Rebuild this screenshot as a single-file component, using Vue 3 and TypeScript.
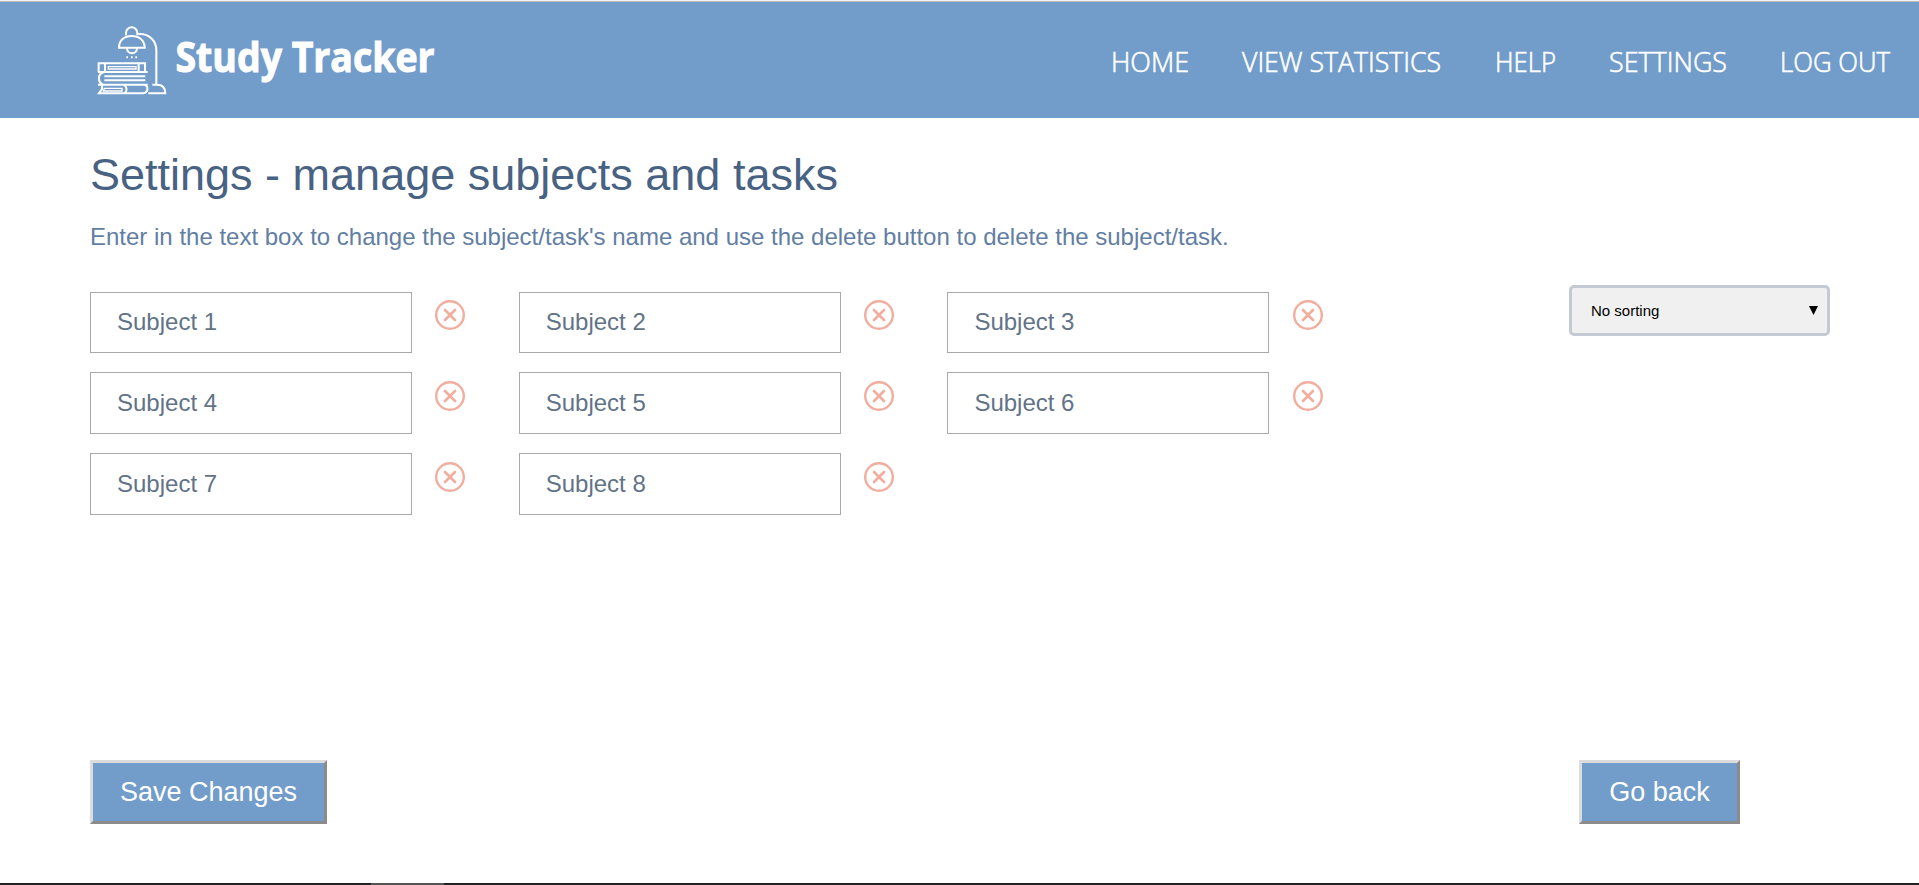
<script setup lang="ts">
import { ref } from 'vue'

interface NavItem {
  label: string
  width: number
}

const navItems: NavItem[] = [
  { label: 'HOME', width: 78 },
  { label: 'VIEW STATISTICS', width: 199 },
  { label: 'HELP', width: 61 },
  { label: 'SETTINGS', width: 118 },
  { label: 'LOG OUT', width: 110 },
]

const subjects = ref<string[]>(Array.from({ length: 8 }, (_, i) => `Subject ${i + 1}`))
const sorting = ref('none')

function removeSubject(index: number): void {
  subjects.value.splice(index, 1)
}
</script>

<template>
  <div class="page">
    <header class="header">
      <div class="brand">
        <svg class="lamp" viewBox="0 0 270 270" fill="none" stroke="#fff" stroke-width="6.2">
          <path d="M123 61V53a17 16 0 0 1 34 0v8" />
          <path d="M102 98C102 76 118 63 140 63S179 76 179 98Z" />
          <path d="M126 100a15 15 0 0 0 30 0" />
          <path d="M124 127h5M138 127h5M151 127h5" />
          <path d="M157 57h8c29 0 49 22 49 48v103" />
          <path d="M202 209h14c15 0 25 9 25 26h-51" />
          <path d="M41 171v-26h139v26M60 145v26M161 145v26M39 171h149" />
          <path d="M70 155h83v7H70z" stroke-width="4" />
          <path d="M56 172c-19 5-19 32 0 37M58 184h123M58 196h123M39 209h149" />
          <path d="M51 211v11l-9 13h132c17-2 17-23 4-25M118 211c9 5 9 19 0 24" />
          <path d="M58 220h53v8H55z" stroke-width="4" />
        </svg>
        <svg class="wordmark" width="270" height="70">
          <text x="0.5" y="42" textLength="259" lengthAdjust="spacingAndGlyphs">Study Tracker</text>
        </svg>
      </div>
      <nav class="nav">
        <a v-for="item in navItems" :key="item.label">
          <svg :width="item.width" height="42">
            <text x="0" y="27" :textLength="item.width" lengthAdjust="spacingAndGlyphs">{{ item.label }}</text>
          </svg>
        </a>
      </nav>
    </header>

    <main class="content">
      <h1>Settings - manage subjects and tasks</h1>
      <p class="hint">Enter in the text box to change the subject/task's name and use the delete button to delete the subject/task.</p>

      <div class="row">
        <div class="subjects">
          <div v-for="(_, i) in subjects" :key="i" class="subject">
            <input v-model="subjects[i]" type="text" />
            <button class="delete" type="button" aria-label="Delete" @click="removeSubject(i)">
              <svg width="30" height="30" viewBox="0 0 30 30" fill="none" stroke="#f1ad9d">
                <circle cx="15" cy="15" r="13.8" stroke-width="2.4" />
                <path d="M10 10l10 10M20 10L10 20" stroke-width="2.7" stroke-linecap="round" />
              </svg>
            </button>
          </div>
        </div>
        <div class="sort">
          <select v-model="sorting">
            <option value="none">No sorting</option>
          </select>
          <svg class="caret" width="9" height="9" viewBox="0 0 9 9"><path d="M0 0h9L4.5 9z" /></svg>
        </div>
      </div>

      <div class="actions">
        <button class="action" type="button">Save Changes</button>
        <button class="action back" type="button">Go back</button>
      </div>
    </main>
    <footer class="edge"><span></span></footer>
  </div>
</template>

<style>
body {
  margin: 0;
  background: #fff;
}
</style>

<style scoped>
.page {
  display: flex;
  flex-direction: column;
  box-sizing: border-box;
  height: 885px;
  overflow: hidden;
  border-top: 1px solid #f1f3f4;
  font-family: "Liberation Sans", Arial, sans-serif;
}

.header {
  display: flex;
  justify-content: space-between;
  box-sizing: border-box;
  height: 117px;
  padding: 0 29px 0 85px;
  border-top: 1px solid #bcbcb9;
  background: #729cca;
}

.brand {
  display: flex;
}

.lamp {
  width: 90px;
  height: 90px;
  margin-top: 13px;
}

.wordmark {
  margin-top: 28px;
}

.wordmark text {
  fill: #fff;
  font: 700 41px "Open Sans", "Noto Sans", sans-serif;
  stroke: #fff;
  stroke-width: 1px;
}

.nav {
  display: flex;
  gap: 53.2px;
  padding-top: 43px;
}

.nav text {
  fill: #fff;
  font: 300 27px "Open Sans", "Noto Sans", sans-serif;
  stroke: #fff;
  stroke-width: 0.6px;
}

svg {
  overflow: visible;
}

.nav svg,
.delete svg {
  display: block;
}

.content {
  flex: 1;
  padding: 0 89px 0 90px;
}

h1 {
  margin: 31px 0 0;
  color: #476282;
  font-size: 45px;
  font-weight: 400;
  line-height: 52px;
}

.hint {
  margin: 22px 0 0;
  color: #627ea3;
  font-size: 24px;
  line-height: 28px;
  white-space: nowrap;
}

.row {
  display: flex;
  justify-content: space-between;
  align-items: flex-start;
  height: 509px;
  padding-top: 34px;
  box-sizing: border-box;
}

.subjects {
  display: grid;
  grid-template-columns: repeat(3, 428.7px);
  grid-auto-rows: 80.8px;
  padding-top: 6.6px;
}

.subject {
  display: flex;
  align-items: flex-start;
  gap: 23.2px;
}

input {
  box-sizing: border-box;
  width: 322px;
  height: 61.4px;
  padding: 0 26px 0.4px;
  border: 1px solid #a9a9a9;
  color: #627387;
  background: #fff;
  font: 24px "Liberation Sans", Arial, sans-serif;
}

.delete {
  margin: 8.6px 0 0;
  padding: 0;
  border: 0;
  background: none;
}

.sort {
  position: relative;
}

select {
  display: block;
  box-sizing: border-box;
  width: 261px;
  height: 51px;
  padding: 0 19px;
  appearance: none;
  border: 3px solid #c3cad4;
  border-radius: 5px;
  color: #000;
  background: #f0f0f0;
  font: 15px "Liberation Sans", Arial, sans-serif;
}

.caret {
  position: absolute;
  top: 21px;
  right: 12px;
}

.actions {
  display: flex;
  justify-content: space-between;
  padding-right: 90px;
}

.action {
  box-sizing: border-box;
  width: 237px;
  height: 64px;
  padding: 0;
  border: 3px solid;
  border-color: #dcdcdc #8b8b8b #8b8b8b #dcdcdc;
  color: #fff;
  background: #729cca;
  font: 27px "Liberation Sans", Arial, sans-serif;
}

.back {
  width: 161px;
}

.edge {
  height: 2px;
  background: #222126;
}

.edge span {
  display: block;
  width: 73px;
  height: 2px;
  margin-left: 371px;
  background: #555;
}
</style>
